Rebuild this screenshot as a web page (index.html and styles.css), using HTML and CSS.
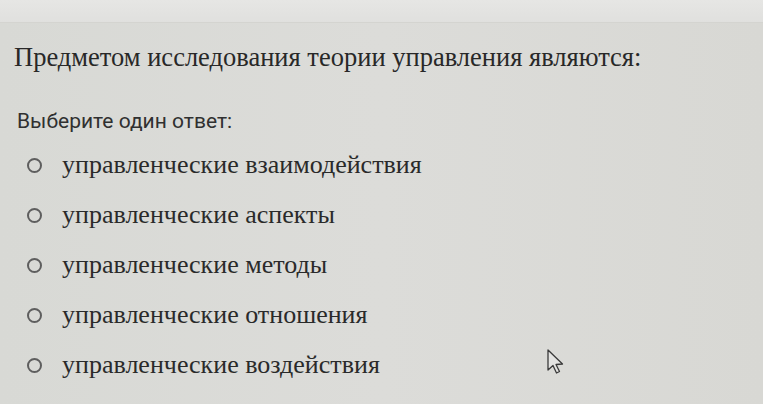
FILE: index.html
```html
<!DOCTYPE html>
<html lang="ru">
<head>
<meta charset="utf-8">
<link rel="stylesheet" href="styles.css">
</head>
<body>
<div class="topband"></div>
<main class="quiz">
  <h1 class="question">Предметом исследования теории управления являются:</h1>
  <p class="prompt">Выберите один ответ:</p>
  <ul class="answers">
    <li class="answer"><span class="radio"></span><span class="label">управленческие взаимодействия</span></li>
    <li class="answer"><span class="radio"></span><span class="label">управленческие аспекты</span></li>
    <li class="answer"><span class="radio"></span><span class="label">управленческие методы</span></li>
    <li class="answer"><span class="radio"></span><span class="label">управленческие отношения</span></li>
    <li class="answer"><span class="radio"></span><span class="label">управленческие воздействия</span></li>
  </ul>
</main>
<svg class="cursor" width="20" height="28" viewBox="0 0 20 28">
  <path d="M2 2 L2 22 L7 17.5 L10.5 25 L13.5 23.5 L10 16.5 L16.5 16 Z" fill="#e4e4e2" stroke="#3a3a3a" stroke-width="1.3" stroke-linejoin="round"/>
</svg>
</body>
</html>
```
FILE: styles.css
```css
html, body {
  margin: 0;
  padding: 0;
}
body {
  width: 763px;
  height: 404px;
  overflow: hidden;
  background: linear-gradient(90deg, #d8d9d5 0%, #dcdcd9 50%, #d8d8d4 100%);
  position: relative;
}
.topband {
  height: 22px;
  background: linear-gradient(180deg, #e6e6e4, #e0e0de);
  border-bottom: 1px solid #d4d4d0;
}
.quiz {
  padding: 19px 0 0 14px;
  color: #2e2e2e;
}
.question {
  margin: 0;
  font-family: "Liberation Serif", "Times New Roman", serif;
  font-weight: normal;
  font-size: 26.5px;
  line-height: 30px;
  color: #282828;
}
.prompt {
  margin: 36px 0 0 3px;
  font-family: Roboto, "Liberation Sans", sans-serif;
  font-size: 21px;
  line-height: 26px;
  color: #303030;
}
.answers {
  list-style: none;
  margin: 6px 0 0 13px;
  padding: 0;
}
.answer {
  display: flex;
  align-items: center;
  height: 50px;
}
.radio {
  width: 11px;
  height: 11px;
  border: 2px solid #5e5e5e;
  border-radius: 50%;
  margin-right: 20px;
  flex: none;
}
.label {
  font-family: "Liberation Serif", "Times New Roman", serif;
  font-size: 26px;
  color: #2a2a2a;
}
.cursor {
  position: absolute;
  left: 546px;
  top: 348px;
}
```
